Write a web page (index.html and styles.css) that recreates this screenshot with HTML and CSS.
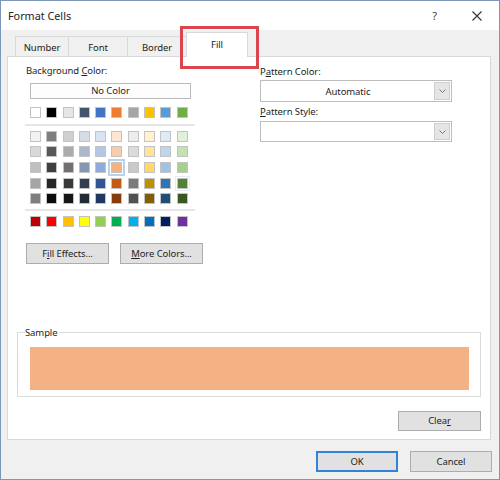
FILE: index.html
```html
<!DOCTYPE html>
<html>
<head>
<meta charset="utf-8">
<link rel="stylesheet" href="styles.css">
</head>
<body>
<div class="window">
  <div class="titlebar">
    <span class="title">Format Cells</span>
    <div class="tb-icons">
      <span class="help">?</span>
      <svg class="close" width="10" height="10" viewBox="0 0 10 10"><path d="M0.5 0.5 L9.5 9.5 M9.5 0.5 L0.5 9.5" stroke="#333" stroke-width="1.1" fill="none"/></svg>
    </div>
  </div>
  <div class="tabs">
    <div class="tab t-number">Number</div>
    <div class="tab t-font">Font</div>
    <div class="tab t-border">Border</div>
    <div class="tab t-fill active">Fill</div>
  </div>
  <div class="highlight"></div>
  <div class="panel">
    <div class="top">
      <div class="left">
        <div class="label">Background <u>C</u>olor:</div>
        <div class="nocolor">No Color</div>
        <div class="grid row0">
          <span class="sw" style="background:#ffffff"></span>
          <span class="sw" style="background:#000000"></span>
          <span class="sw" style="background:#e7e6e6"></span>
          <span class="sw" style="background:#44546a"></span>
          <span class="sw" style="background:#4472c4"></span>
          <span class="sw" style="background:#ed7d31"></span>
          <span class="sw" style="background:#a5a5a5"></span>
          <span class="sw" style="background:#ffc000"></span>
          <span class="sw" style="background:#5b9bd5"></span>
          <span class="sw" style="background:#70ad47"></span>
        </div>
        <div class="sep sep1"></div>
        <div class="grid block">
          <span class="sw" style="background:#f2f2f2"></span>
          <span class="sw" style="background:#7f7f7f"></span>
          <span class="sw" style="background:#d0cece"></span>
          <span class="sw" style="background:#d6dce4"></span>
          <span class="sw" style="background:#dae3f3"></span>
          <span class="sw" style="background:#fbe5d5"></span>
          <span class="sw" style="background:#ededed"></span>
          <span class="sw" style="background:#fff2cc"></span>
          <span class="sw" style="background:#deebf6"></span>
          <span class="sw" style="background:#e2efd9"></span>

          <span class="sw" style="background:#d8d8d8"></span>
          <span class="sw" style="background:#595959"></span>
          <span class="sw" style="background:#aeabab"></span>
          <span class="sw" style="background:#adb9ca"></span>
          <span class="sw" style="background:#b4c7e7"></span>
          <span class="sw" style="background:#f7cbac"></span>
          <span class="sw" style="background:#dbdbdb"></span>
          <span class="sw" style="background:#fee599"></span>
          <span class="sw" style="background:#bdd7ee"></span>
          <span class="sw" style="background:#c5e0b3"></span>

          <span class="sw" style="background:#bfbfbf"></span>
          <span class="sw" style="background:#3f3f3f"></span>
          <span class="sw" style="background:#757070"></span>
          <span class="sw" style="background:#8496b0"></span>
          <span class="sw" style="background:#8faadc"></span>
          <span class="sw selected" style="background:#f4b183"></span>
          <span class="sw" style="background:#c9c9c9"></span>
          <span class="sw" style="background:#ffd965"></span>
          <span class="sw" style="background:#9dc3e6"></span>
          <span class="sw" style="background:#a8d08d"></span>

          <span class="sw" style="background:#a5a5a5"></span>
          <span class="sw" style="background:#262626"></span>
          <span class="sw" style="background:#3a3838"></span>
          <span class="sw" style="background:#323f4f"></span>
          <span class="sw" style="background:#2f5597"></span>
          <span class="sw" style="background:#c55a11"></span>
          <span class="sw" style="background:#7b7b7b"></span>
          <span class="sw" style="background:#bf9000"></span>
          <span class="sw" style="background:#2e75b6"></span>
          <span class="sw hover" style="background:#538135"></span>

          <span class="sw" style="background:#7f7f7f"></span>
          <span class="sw" style="background:#0c0c0c"></span>
          <span class="sw" style="background:#171616"></span>
          <span class="sw" style="background:#222a35"></span>
          <span class="sw" style="background:#203864"></span>
          <span class="sw" style="background:#843c0c"></span>
          <span class="sw" style="background:#525252"></span>
          <span class="sw" style="background:#7f6000"></span>
          <span class="sw" style="background:#1f4e79"></span>
          <span class="sw" style="background:#385723"></span>
        </div>
        <div class="sep sep2"></div>
        <div class="grid standard">
          <span class="sw" style="background:#c00000"></span>
          <span class="sw" style="background:#ff0000"></span>
          <span class="sw" style="background:#ffc000"></span>
          <span class="sw" style="background:#ffff00"></span>
          <span class="sw" style="background:#92d050"></span>
          <span class="sw" style="background:#00b050"></span>
          <span class="sw" style="background:#00b0f0"></span>
          <span class="sw" style="background:#0070c0"></span>
          <span class="sw" style="background:#002060"></span>
          <span class="sw" style="background:#7030a0"></span>
        </div>
        <div class="btnrow">
          <div class="btn">F<u>i</u>ll Effects...</div>
          <div class="btn more"><u>M</u>ore Colors...</div>
        </div>
      </div>
      <div class="right">
        <div class="label lbl-pc">P<u>a</u>ttern Color:</div>
        <div class="combo combo1">
          <span class="combo-text">Automatic</span>
          <span class="drop"><svg width="7" height="4" viewBox="0 0 7 4"><path d="M0.5 0.5 L3.5 3.5 L6.5 0.5" stroke="#777" stroke-width="1" fill="none"/></svg></span>
        </div>
        <div class="label lbl-ps"><u>P</u>attern Style:</div>
        <div class="combo combo2">
          <span class="combo-text"></span>
          <span class="drop"><svg width="7" height="4" viewBox="0 0 7 4"><path d="M0.5 0.5 L3.5 3.5 L6.5 0.5" stroke="#777" stroke-width="1" fill="none"/></svg></span>
        </div>
      </div>
    </div>
    <div class="sample">
      <span class="legend">Sample</span>
      <div class="sample-fill"></div>
    </div>
    <div class="btn clear">Clea<u>r</u></div>
  </div>
  <div class="footer">
    <div class="btn ok">OK</div>
    <div class="btn">Cancel</div>
  </div>
</div>
</body>
</html>
```
FILE: styles.css
```css
* { box-sizing: border-box; }
html, body { margin: 0; padding: 0; background: #ffffff; }
body {
  font-family: "Noto Sans", "Open Sans", sans-serif;
  font-size: 9.5px;
  letter-spacing: -0.1px;
  color: #1e1e1e;
}
u { text-decoration: underline; text-underline-offset: 1px; }

.window {
  position: relative;
  width: 500px;
  height: 480px;
  border: 1px solid #7d97bb;
  background: #f0f0f0;
  display: flex;
  flex-direction: column;
}

.titlebar {
  height: 29px;
  background: #ffffff;
  display: flex;
  align-items: center;
  justify-content: space-between;
  padding: 0 17px 0 7px;
  flex-shrink: 0;
}
.title { font-size: 10.8px; letter-spacing: 0; color: #222; }
.tb-icons { display: flex; align-items: center; }
.help { font-size: 11px; color: #444; margin-right: 35px; }
.close { display: block; }

.tabs {
  display: flex;
  align-items: flex-end;
  height: 20px;
  margin-top: 6px;
  padding-left: 14px;
  flex-shrink: 0;
}
.tab {
  height: 20px;
  border: 1px solid #d9d9d9;
  border-bottom: none;
  border-right: none;
  display: flex;
  align-items: center;
  justify-content: center;
  color: #222;
  padding-top: 1px;
}
.t-number { width: 53px; }
.t-font { width: 59px; }
.t-border { width: 59px; }
.t-fill {
  width: 62px;
  height: 25px;
  margin-bottom: -1px;
  background: #ffffff;
  border-right: 1px solid #d9d9d9;
  position: relative;
  z-index: 1;
  padding-top: 0;
  padding-bottom: 2px;
}

.highlight {
  position: absolute;
  left: 179px;
  top: 25px;
  width: 79px;
  height: 43px;
  border: 3px solid #d9464e;
  z-index: 2;
}

.panel {
  margin-left: 6px;
  width: 484px;
  height: 384px;
  background: #ffffff;
  border: 1px solid #d9d9d9;
  flex-shrink: 0;
}

.top {
  display: flex;
  padding: 7px 0 0 18px;
}
.left { width: 234px; }
.right { width: 192px; }

.label { height: 14px; line-height: 14px; white-space: nowrap; }

.nocolor {
  margin: 5px 0 0 4px;
  width: 161px;
  height: 16px;
  border: 1px solid #b9b9b9;
  background: #fdfdfd;
  text-align: center;
  line-height: 14px;
}

.grid {
  display: grid;
  grid-template-columns: repeat(10, 11px);
  grid-auto-rows: 11px;
  column-gap: 5.3px;
  margin-left: 4px;
}
.row0 { margin-top: 8px; }
.block { margin-top: 4.7px; row-gap: 4.65px; }
.standard { margin-top: 4.4px; }
.sw {
  display: block;
  width: 11px;
  height: 11px;
  border: 1px solid #c3c3c3;
}
.sw.selected { outline: 2px solid #bcd0e8; outline-offset: 1px; }
.sw.hover { outline: 1px solid #e6edf5; outline-offset: 1px; }

.sep {
  height: 2px;
  width: 170px;
  margin-left: -1px;
  background: #e6e6e6;
}
.sep1 { margin-top: 6px; }
.sep2 { margin-top: 5px; }

.btn {
  background: #e1e1e1;
  border: 1px solid #adadad;
  display: flex;
  align-items: center;
  justify-content: center;
  color: #1e1e1e;
  white-space: nowrap;
}
.btnrow { display: flex; margin-top: 16.3px; }
.btnrow .btn { width: 83px; height: 21px; }
.btnrow .more { margin-left: 11px; }

.lbl-pc { margin-top: 1px; }
.combo {
  width: 192px;
  border: 1px solid #bdbdbd;
  background: #ffffff;
  display: flex;
  align-items: stretch;
  padding: 1px;
}
.combo1 { height: 22px; margin-top: 1px; }
.lbl-ps { margin-top: 3px; }
.combo2 { height: 21px; margin-top: 2px; }
.combo-text {
  flex: 1;
  display: flex;
  align-items: center;
  justify-content: center;
}
.drop {
  width: 16px;
  background: #e5e5e5;
  border: 1px solid #cfcfcf;
  display: flex;
  align-items: center;
  justify-content: center;
}
.drop svg { display: block; }

.sample {
  position: relative;
  margin: 68px 0 0 9px;
  width: 464px;
  height: 65px;
  border: 1px solid #dcdcdc;
  padding: 14px 0 0 12px;
}
.legend {
  position: absolute;
  top: -7px;
  left: 7px;
  line-height: 14px;
  background: #ffffff;
  padding-right: 2px;
}
.sample-fill {
  width: 439px;
  height: 43px;
  background: #f4b183;
}

.clear {
  margin: 14px 0 0 390px;
  width: 83px;
  height: 20px;
}

.footer {
  display: flex;
  justify-content: flex-end;
  gap: 12px;
  padding-right: 7px;
  margin-top: 11px;
}
.footer .btn { width: 82px; height: 21px; }
.footer .ok { border: 2px solid #2f84d6; }
```
